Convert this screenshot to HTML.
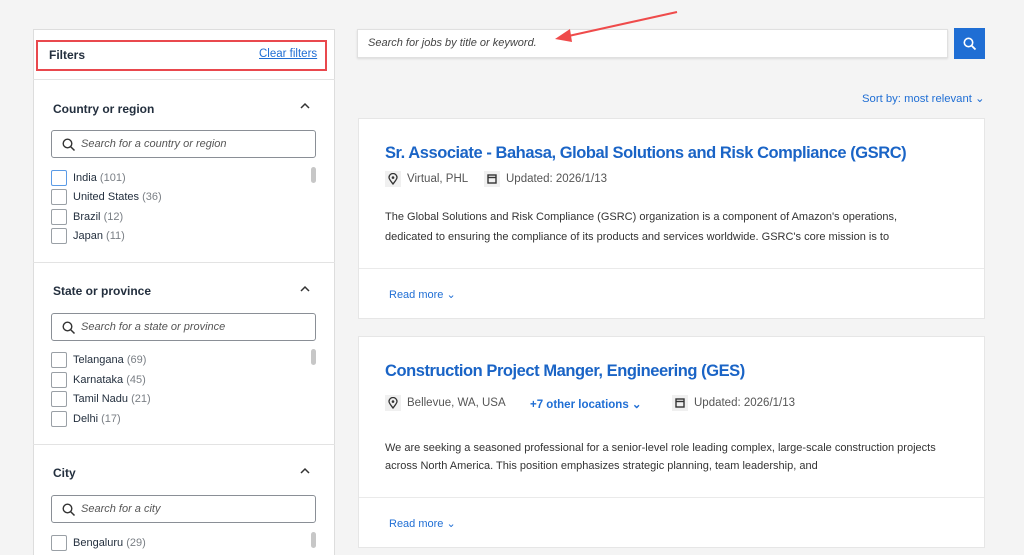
<!DOCTYPE html>
<html><head><meta charset="utf-8"><style>
*{box-sizing:border-box;margin:0;padding:0}
html,body{width:1024px;height:555px;overflow:hidden}
body{background:#f4f4f4;font-family:"Liberation Sans",sans-serif;position:relative;color:#232f3e}
.a{position:absolute;white-space:nowrap}
.panel{position:absolute;left:33px;top:29px;width:302px;height:540px;background:#fff;border:1px solid #ddd}
.hr{position:absolute;left:33px;width:302px;height:1px;background:#e3e3e3}
.h{font-weight:bold;font-size:12px;color:#232f3e}
.sb{position:absolute;left:51px;width:265px;height:28px;border:1px solid #8a8f96;border-radius:3px;background:#fff}
.sb span{position:absolute;left:29px;top:7px;font-size:11px;font-style:italic;color:#555}
.cb{position:absolute;left:51px;width:16px;height:16px;border:1px solid #9aa0a6;border-radius:2px;background:#fff}
.lbl{position:absolute;left:73px;font-size:11px;color:#232f3e}
.lbl i{font-style:normal;color:#7a7f85}
.scr{position:absolute;left:311px;width:5px;height:16px;background:#c7c7c7;border-radius:3px}
.card{position:absolute;left:358px;width:627px;background:#fff;border:1px solid #e6e6e6}
.title{font-size:16.5px;font-weight:bold;color:#1a64c6;letter-spacing:-0.45px}
.meta{font-size:11.5px;color:#555}
.desc{font-size:11px;color:#333}
.blue{color:#1f6ed4}
</style></head><body>
<div class="panel"></div>
<div class="a" style="left:36px;top:40px;width:291px;height:31px;border:2px solid #e9484d"></div>
<div class="a h" style="left:49px;top:48px">Filters</div>
<div class="a" style="left:259px;top:48px;font-size:11.5px;color:#1f6ed4;text-decoration:underline">Clear filters</div>
<div class="hr" style="top:79px"></div>

<div class="a h" style="left:53px;top:102px">Country or region</div>
<svg class="a" style="left:299px;top:102px" width="12" height="8"><path d="M2 6 L6 2 L10 6" stroke="#333" stroke-width="1.5" fill="none"/></svg>
<div class="sb" style="top:130px"><svg style="position:absolute;left:10px;top:7px" width="14" height="14"><circle cx="5.5" cy="5.5" r="4.3" stroke="#333" stroke-width="1.4" fill="none"/><path d="M8.6 8.6 L12.5 12.5" stroke="#333" stroke-width="1.5"/></svg><span>Search for a country or region</span></div>
<div class="scr" style="top:167px"></div>
<div class="cb" style="top:170px;border-color:#5b9be6"></div><div class="lbl" style="top:172px">India <i>(101)</i></div>
<div class="cb" style="top:189px"></div><div class="lbl" style="top:191px">United States <i>(36)</i></div>
<div class="cb" style="top:209px"></div><div class="lbl" style="top:211px">Brazil <i>(12)</i></div>
<div class="cb" style="top:228px"></div><div class="lbl" style="top:230px">Japan <i>(11)</i></div>
<div class="hr" style="top:262px"></div>

<div class="a h" style="left:53px;top:284px">State or province</div>
<svg class="a" style="left:299px;top:285px" width="12" height="8"><path d="M2 6 L6 2 L10 6" stroke="#333" stroke-width="1.5" fill="none"/></svg>
<div class="sb" style="top:313px"><svg style="position:absolute;left:10px;top:7px" width="14" height="14"><circle cx="5.5" cy="5.5" r="4.3" stroke="#333" stroke-width="1.4" fill="none"/><path d="M8.6 8.6 L12.5 12.5" stroke="#333" stroke-width="1.5"/></svg><span>Search for a state or province</span></div>
<div class="scr" style="top:349px"></div>
<div class="cb" style="top:352px"></div><div class="lbl" style="top:354px">Telangana <i>(69)</i></div>
<div class="cb" style="top:372px"></div><div class="lbl" style="top:374px">Karnataka <i>(45)</i></div>
<div class="cb" style="top:391px"></div><div class="lbl" style="top:393px">Tamil Nadu <i>(21)</i></div>
<div class="cb" style="top:411px"></div><div class="lbl" style="top:413px">Delhi <i>(17)</i></div>
<div class="hr" style="top:444px"></div>

<div class="a h" style="left:53px;top:466px">City</div>
<svg class="a" style="left:299px;top:467px" width="12" height="8"><path d="M2 6 L6 2 L10 6" stroke="#333" stroke-width="1.5" fill="none"/></svg>
<div class="sb" style="top:495px"><svg style="position:absolute;left:10px;top:7px" width="14" height="14"><circle cx="5.5" cy="5.5" r="4.3" stroke="#333" stroke-width="1.4" fill="none"/><path d="M8.6 8.6 L12.5 12.5" stroke="#333" stroke-width="1.5"/></svg><span>Search for a city</span></div>
<div class="scr" style="top:532px"></div>
<div class="cb" style="top:535px"></div><div class="lbl" style="top:537px">Bengaluru <i>(29)</i></div>

<div class="a" style="left:357px;top:29px;width:591px;height:29px;background:#fff;border:1px solid #e0e0e0;box-shadow:0 1px 2px rgba(0,0,0,.1)"></div>
<div class="a" style="left:368px;top:37px;font-size:11px;font-style:italic;color:#444">Search for jobs by title or keyword.</div>
<div class="a" style="left:954px;top:28px;width:31px;height:31px;background:#1f6ed4"></div>
<svg class="a" style="left:963px;top:37px" width="14" height="14"><circle cx="5.5" cy="5.5" r="4.2" stroke="#fff" stroke-width="1.6" fill="none"/><path d="M8.6 8.6 L12.5 12.5" stroke="#fff" stroke-width="1.8"/></svg>
<svg class="a" style="left:550px;top:8px" width="130" height="36"><path d="M127 4 L14 29" stroke="#ef4b4b" stroke-width="2"/><path d="M5 31 L20 21 L22 34 Z" fill="#ef4b4b"/></svg>

<div class="a blue" style="left:862px;top:92px;font-size:11.3px">Sort by: most relevant ⌄</div>

<div class="card" style="top:118px;height:201px"></div>
<div class="a title" style="left:385px;top:144px">Sr. Associate - Bahasa, Global Solutions and Risk Compliance (GSRC)</div>
<div class="a" style="left:385px;top:171px;width:16px;height:16px;background:#f0f0f0"></div>
<svg class="a" style="left:388px;top:173px" width="10" height="12"><path d="M5 11 C2 7 1 6 1 4.5 A4 4 0 0 1 9 4.5 C9 6 8 7 5 11Z" stroke="#333" stroke-width="1.3" fill="none"/><circle cx="5" cy="4.6" r="1.3" fill="#333"/></svg>
<div class="a meta" style="left:407px;top:173px">Virtual, PHL</div>
<div class="a" style="left:484px;top:171px;width:16px;height:16px;background:#f0f0f0"></div>
<svg class="a" style="left:487px;top:174px" width="10" height="10"><rect x="1" y="1" width="8" height="8" stroke="#333" stroke-width="1.4" fill="none"/><path d="M1 3.5H9" stroke="#333" stroke-width="1.4"/></svg>
<div class="a meta" style="left:506px;top:173px">Updated: 2026/1/13</div>
<div class="a desc" style="left:385px;top:211px">The Global Solutions and Risk Compliance (GSRC) organization is a component of Amazon's operations,</div>
<div class="a desc" style="left:385px;top:231px">dedicated to ensuring the compliance of its products and services worldwide. GSRC's core mission is to</div>
<div class="a" style="left:359px;top:268px;width:625px;height:1px;background:#eaeaea"></div>
<div class="a blue" style="left:389px;top:288px;font-size:11px">Read more ⌄</div>

<div class="card" style="top:336px;height:212px"></div>
<div class="a title" style="left:385px;top:362px">Construction Project Manger, Engineering (GES)</div>
<div class="a" style="left:385px;top:395px;width:16px;height:16px;background:#f0f0f0"></div>
<svg class="a" style="left:388px;top:397px" width="10" height="12"><path d="M5 11 C2 7 1 6 1 4.5 A4 4 0 0 1 9 4.5 C9 6 8 7 5 11Z" stroke="#333" stroke-width="1.3" fill="none"/><circle cx="5" cy="4.6" r="1.3" fill="#333"/></svg>
<div class="a meta" style="left:407px;top:397px">Bellevue, WA, USA</div>
<div class="a blue" style="left:530px;top:397px;font-size:11.5px;font-weight:bold">+7 other locations ⌄</div>
<div class="a" style="left:672px;top:395px;width:16px;height:16px;background:#f0f0f0"></div>
<svg class="a" style="left:675px;top:398px" width="10" height="10"><rect x="1" y="1" width="8" height="8" stroke="#333" stroke-width="1.4" fill="none"/><path d="M1 3.5H9" stroke="#333" stroke-width="1.4"/></svg>
<div class="a meta" style="left:694px;top:397px">Updated: 2026/1/13</div>
<div class="a desc" style="left:385px;top:442px">We are seeking a seasoned professional for a senior-level role leading complex, large-scale construction projects</div>
<div class="a desc" style="left:385px;top:460px">across North America. This position emphasizes strategic planning, team leadership, and</div>
<div class="a" style="left:359px;top:497px;width:625px;height:1px;background:#eaeaea"></div>
<div class="a blue" style="left:389px;top:517px;font-size:11px">Read more ⌄</div>
</body></html>
